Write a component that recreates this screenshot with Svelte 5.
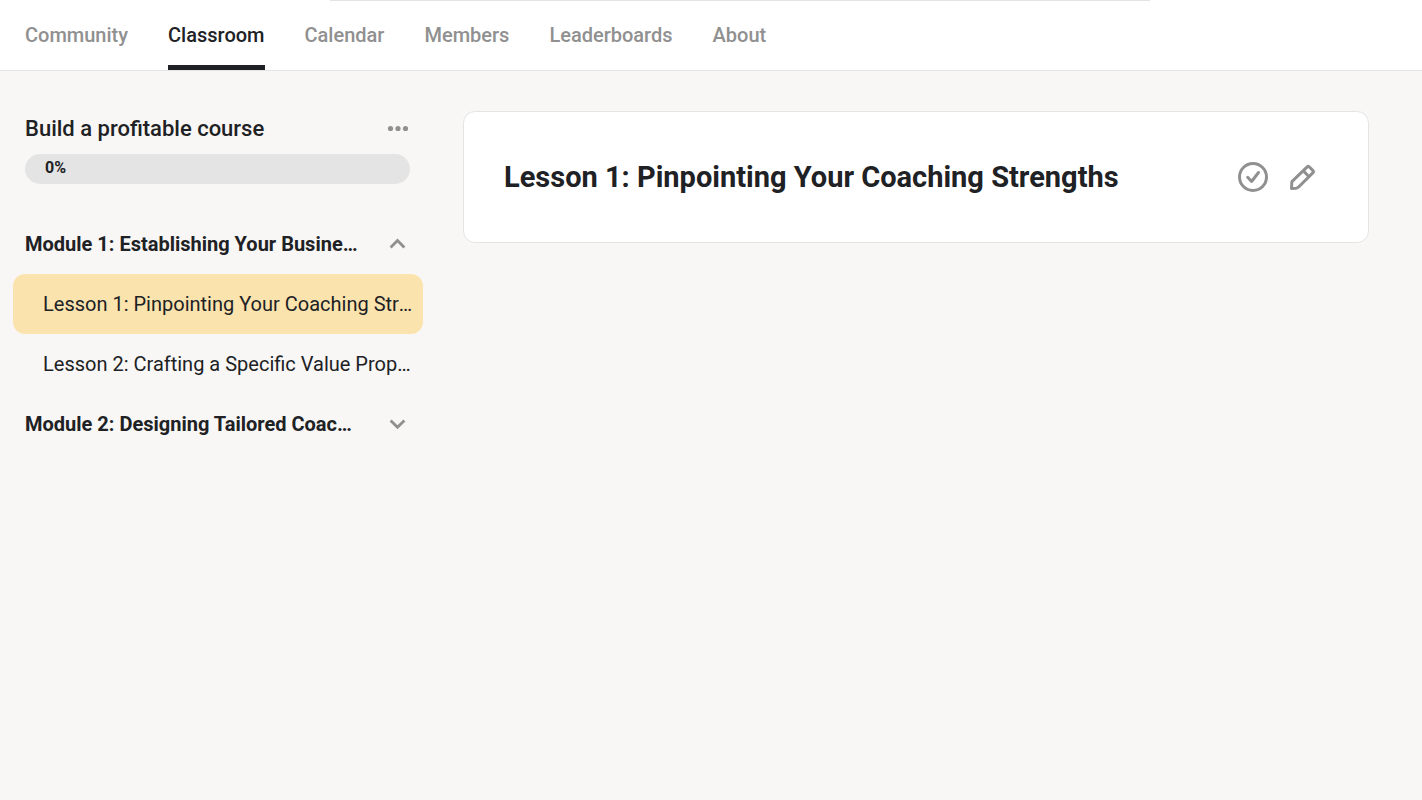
<script>
  const tabs = ['Community', 'Classroom', 'Calendar', 'Members', 'Leaderboards', 'About'];

  let activeTab = $state('Classroom');
  let activeLesson = $state('Lesson 1: Pinpointing Your Coaching Strengths');
  let progress = $state(0);

  let modules = $state([
    {
      title: 'Module 1: Establishing Your Business',
      open: true,
      lessons: [
        'Lesson 1: Pinpointing Your Coaching Strengths',
        'Lesson 2: Crafting a Specific Value Proposition'
      ]
    },
    {
      title: 'Module 2: Designing Tailored Coaching',
      open: false,
      lessons: []
    }
  ]);

  function selectTab(e, tab) {
    e.preventDefault();
    activeTab = tab;
  }

  function selectLesson(e, lesson) {
    e.preventDefault();
    activeLesson = lesson;
  }
</script>

<header>
  <div class="search-edge"></div>
  <nav>
    {#each tabs as tab}
      <a href="#{tab.toLowerCase()}" class:active={tab === activeTab} onclick={(e) => selectTab(e, tab)}>{tab}</a>
    {/each}
  </nav>
</header>

<div class="layout">
  <aside>
    <div class="course-head">
      <h2>Build a profitable course</h2>
      <button class="icon-btn" aria-label="Course options">
        <svg width="24" height="24" viewBox="0 0 24 24" fill="currentColor">
          <circle cx="4.5" cy="11.5" r="2.6" />
          <circle cx="12" cy="11.5" r="2.6" />
          <circle cx="19.5" cy="11.5" r="2.6" />
        </svg>
      </button>
    </div>

    <div class="progress" role="progressbar" aria-label="Course progress" aria-valuenow={progress} aria-valuemin="0" aria-valuemax="100">
      <div class="fill" style="width: {progress}%"></div>
      <span>{progress}%</span>
    </div>

    {#each modules as mod}
      <button class="module" aria-expanded={mod.open} onclick={() => (mod.open = !mod.open)}>
        <span class="module-title">{mod.title}</span>
        <svg width="24" height="24" viewBox="0 0 24 24" fill="none" stroke="currentColor" stroke-width="2.8">
          {#if mod.open}
            <path d="m4.6 15.4 6.9-6.9 6.9 6.9" />
          {:else}
            <path d="m4.6 8.4 6.9 6.9 6.9-6.9" />
          {/if}
        </svg>
      </button>
      {#if mod.open}
        {#each mod.lessons as lesson}
          <a
            href="#lesson"
            class="lesson"
            class:active={lesson === activeLesson}
            onclick={(e) => selectLesson(e, lesson)}
          >{lesson}</a>
        {/each}
      {/if}
    {/each}
  </aside>

  <main>
    <article>
      <h1>{activeLesson}</h1>
      <div class="actions">
        <button class="icon-btn" aria-label="Mark as done">
          <svg width="30" height="30" viewBox="0 0 30 30" fill="none" stroke="currentColor" stroke-width="3">
            <circle cx="15" cy="15" r="13.5" />
            <path d="m9.7 15.3 3.9 4.2 6.9-9" stroke-linecap="round" stroke-linejoin="round" />
          </svg>
        </button>
        <button class="icon-btn" aria-label="Edit lesson">
          <svg width="30" height="30" viewBox="0 0 30 30" fill="none" stroke="currentColor" stroke-width="3" stroke-linejoin="round">
            <path d="M3.5 26.5 3.9 19.6 19.2 4.8Q20.2 3.9 21.2 4.8L25 8.6Q25.9 9.6 25 10.6L10.9 24.7Q9.6 26 8 26.2Z" />
            <path d="m15.3 8.9 5.8 5.8" />
          </svg>
        </button>
      </div>
    </article>
  </main>
</div>

<style>
  :global(body) {
    background: #f8f7f5;
    color: #202124;
    font-family: Roboto, 'Liberation Sans', sans-serif;
    font-size: 20px;
  }

  header {
    background: #fff;
    border-bottom: 1px solid #e4e4e4;
  }

  /* lower border of the search field in the bar above */
  .search-edge {
    height: 1px;
    margin: 0 272px 0 330px;
    background: #e4e4e4;
  }

  nav {
    display: flex;
    gap: 40px;
    padding: 0 25px;
  }

  nav a {
    height: 64px;
    line-height: 68px;
    border-bottom: 5px solid transparent;
    color: #909090;
    font-weight: 500;
    text-decoration: none;
  }

  nav a.active {
    color: #202124;
    border-bottom-color: #202124;
  }

  button {
    padding: 0;
    border: none;
    background: none;
    font: inherit;
    color: inherit;
    cursor: pointer;
  }

  svg {
    display: block;
    flex-shrink: 0;
  }

  h1,
  h2 {
    margin: 0;
  }

  .layout {
    display: grid;
    grid-template-columns: 410px minmax(0, 1fr);
    gap: 40px;
    padding: 40px 53px 40px 13px;
  }

  .course-head {
    display: flex;
    align-items: center;
    justify-content: space-between;
    height: 35px;
    padding: 0 13px 0 12px;
  }

  h2 {
    font-size: 22px;
    font-weight: 500;
  }

  .icon-btn,
  .module svg {
    color: #909090;
  }

  .progress {
    display: flex;
    height: 30px;
    margin: 8px 13px 30px 12px;
    border-radius: 16px;
    background: #e4e4e4;
    overflow: hidden;
  }

  .fill {
    background: #009e5d;
  }

  .progress span {
    padding-left: 20px;
    font-size: 16px;
    font-weight: 700;
    line-height: 28px;
  }

  .module {
    display: flex;
    align-items: center;
    justify-content: space-between;
    gap: 28px;
    width: 100%;
    height: 60px;
    padding: 0 13px 0 12px;
    font-weight: 700;
    text-align: left;
  }

  .module-title,
  .lesson {
    overflow: hidden;
    white-space: nowrap;
    text-overflow: ellipsis;
  }

  .lesson {
    display: block;
    height: 60px;
    padding: 0 10px 0 30px;
    border-radius: 12px;
    color: inherit;
    line-height: 60px;
    text-decoration: none;
  }

  .lesson.active {
    background: #fbe3ae;
  }

  article {
    display: flex;
    align-items: center;
    justify-content: space-between;
    gap: 40px;
    min-height: 130px;
    padding: 0 50px 0 40px;
    border: 1px solid #e4e4e4;
    border-radius: 12px;
    background: #fff;
  }

  h1 {
    font-size: 29px;
    font-weight: 700;
  }

  .actions {
    display: flex;
    gap: 20px;
  }
</style>
